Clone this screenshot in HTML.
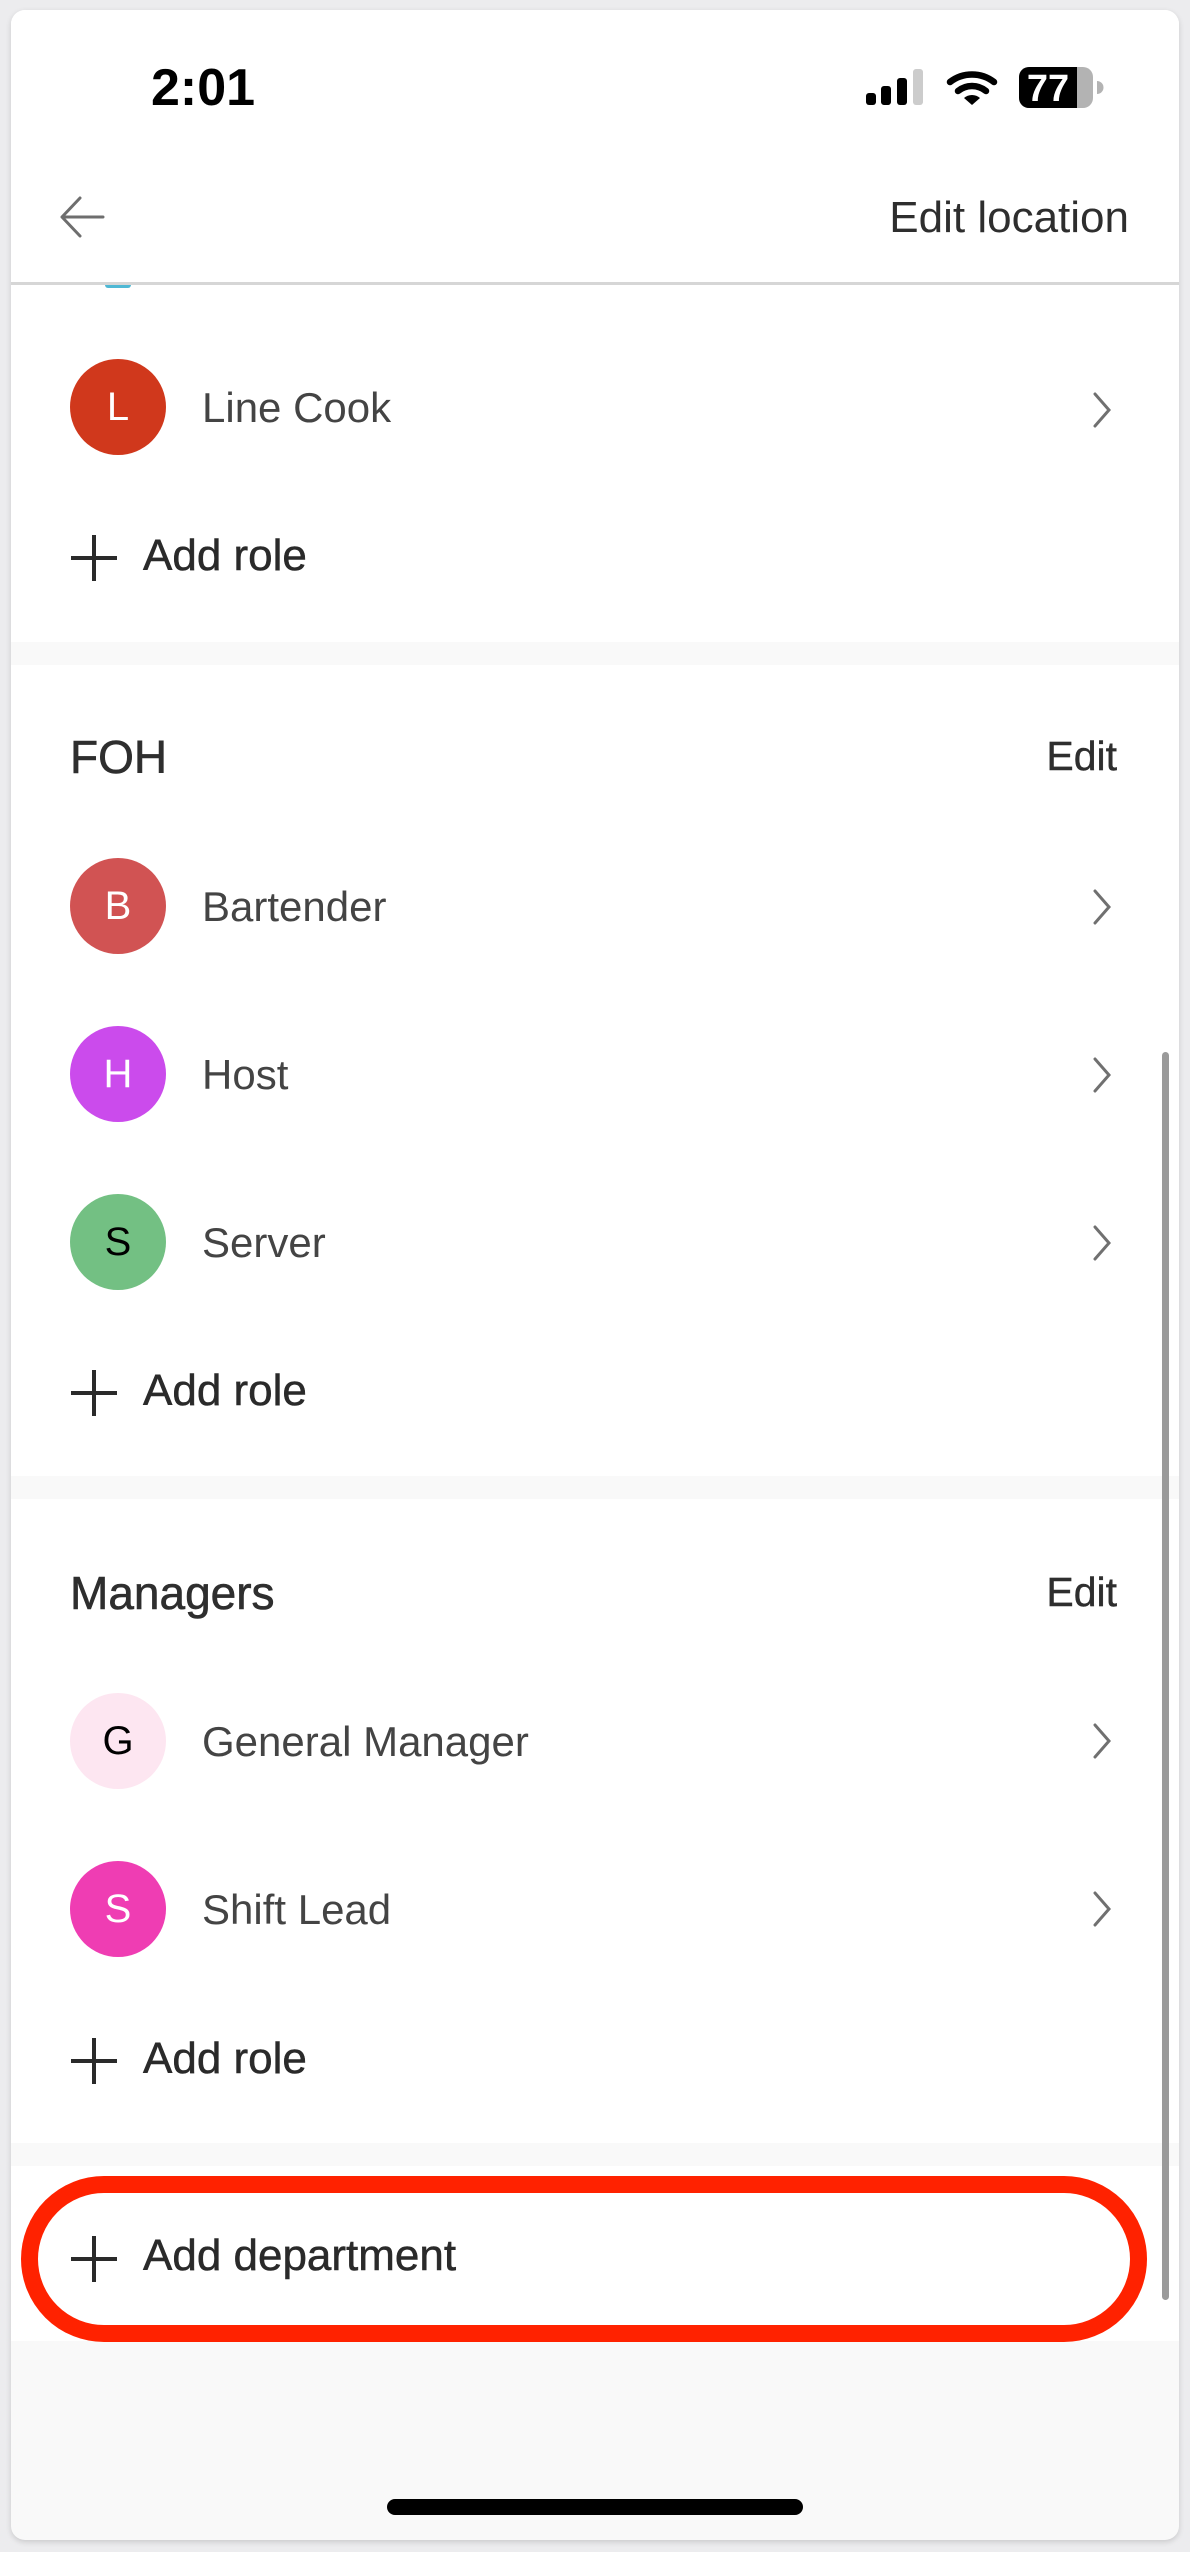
<!DOCTYPE html>
<html><head><meta charset="utf-8"><style>
html,body{margin:0;padding:0;width:1190px;height:2552px;background:#ececee;overflow:hidden;font-family:"Liberation Sans",sans-serif}
.card{position:absolute;left:11px;top:10px;width:1168px;height:2530px;background:#f9f9f9;border-radius:14px;overflow:hidden;box-shadow:0 2px 6px rgba(0,0,0,.15)}
.abs{position:absolute}
.white{position:absolute;left:0;width:1168px;background:#fff}
.t{position:absolute;line-height:1;white-space:nowrap}
.name{font-size:42px;color:#444}
.head{font-size:46px;color:#2e2e2e;-webkit-text-stroke:.6px #2e2e2e}
.add{font-size:44px;color:#2a2a2a;-webkit-text-stroke:.5px #2a2a2a}
.av{position:absolute;width:96px;height:96px;border-radius:50%;color:#fff;font-size:40px;line-height:96px;text-align:center}
</style></head><body>
<div class="card">
 <div class="white" style="top:0;height:632px"></div>
 <div class="white" style="top:655px;height:811px"></div>
 <div class="white" style="top:1489px;height:644px"></div>
 <div class="white" style="top:2156px;height:175px"></div>

 <div class="t" style="left:140px;top:52px;font-size:52px;font-weight:bold;color:#000">2:01</div>
 <svg class="abs" style="left:839px;top:40px" width="260" height="70" viewBox="850 50 260 70">
  <rect x="866" y="93" width="10" height="12" rx="3" fill="#000"/>
  <rect x="881" y="86" width="10" height="19" rx="3" fill="#000"/>
  <rect x="897" y="78" width="10" height="27" rx="3" fill="#000"/>
  <rect x="913" y="69" width="10" height="36" rx="3" fill="#ccc"/>
  <path d="M950 82 A36 36 0 0 1 994 82" stroke="#000" stroke-width="6.5" fill="none" stroke-linecap="round"/>
  <path d="M958 91 A22 22 0 0 1 986 91" stroke="#000" stroke-width="6.5" fill="none" stroke-linecap="round"/>
  <path d="M964 98 L972 105 L980 98 A12 12 0 0 0 964 98Z" fill="#000"/>
  <rect x="1019" y="67" width="74" height="41" rx="10" fill="#b3b3b3"/>
  <path d="M1029 67 H1077 V108 H1029 A10 10 0 0 1 1019 98 V77 A10 10 0 0 1 1029 67Z" fill="#000"/>
  <path d="M1097 81 A6 6 0 0 1 1097 94Z" fill="#b3b3b3"/>
  <text x="1048" y="101" font-family="Liberation Sans" font-weight="bold" font-size="38" fill="#fff" text-anchor="middle">77</text>
 </svg>

 <svg class="abs" style="left:48px;top:184px" width="50" height="50" viewBox="48 184 50 50">
  <path d="M92 207 H51 M69 188 L51 207 L69 226" stroke="#6e6e6e" stroke-width="3" fill="none" stroke-linecap="round" stroke-linejoin="round"/>
 </svg>
 <div class="t" style="right:50px;top:186px;font-size:44px;color:#2e2e2e">Edit location</div>
 <div class="abs" style="left:0;top:272px;width:1168px;height:3px;background:#d6d6d6"></div>
 <div class="abs" style="left:94px;top:275px;width:26px;height:3px;border-radius:0 0 13px 13px;background:#4fb8d4"></div>

 <!-- Line Cook -->
 <div class="av" style="left:59px;top:349px;background:#d0381c">L</div>
 <div class="t name" style="left:191px;top:377px">Line Cook</div>
 <svg class="abs" style="left:1080px;top:380px" width="30" height="40"><path d="M4 4 L18 20 L4 36" stroke="#707070" stroke-width="3" fill="none" stroke-linecap="round"/></svg>
 <svg class="abs" style="left:58px;top:523px" width="50" height="50"><path d="M25 2 V48 M2 25 H48" stroke="#2a2a2a" stroke-width="4"/></svg>
 <div class="t add" style="left:132px;top:524px">Add role</div>

 <!-- FOH -->
 <div class="t head" style="left:59px;top:724px">FOH</div>
 <div class="t head" style="right:62px;top:726px;font-size:41px;-webkit-text-stroke:.4px #2e2e2e">Edit</div>
 <div class="av" style="left:59px;top:848px;background:#d15353">B</div>
 <div class="t name" style="left:191px;top:876px">Bartender</div>
 <svg class="abs" style="left:1080px;top:877px" width="30" height="40"><path d="M4 4 L18 20 L4 36" stroke="#707070" stroke-width="3" fill="none" stroke-linecap="round"/></svg>
 <div class="av" style="left:59px;top:1016px;background:#cb4bec">H</div>
 <div class="t name" style="left:191px;top:1044px">Host</div>
 <svg class="abs" style="left:1080px;top:1045px" width="30" height="40"><path d="M4 4 L18 20 L4 36" stroke="#707070" stroke-width="3" fill="none" stroke-linecap="round"/></svg>
 <div class="av" style="left:59px;top:1184px;background:#73c083;color:#000">S</div>
 <div class="t name" style="left:191px;top:1212px">Server</div>
 <svg class="abs" style="left:1080px;top:1213px" width="30" height="40"><path d="M4 4 L18 20 L4 36" stroke="#707070" stroke-width="3" fill="none" stroke-linecap="round"/></svg>
 <svg class="abs" style="left:58px;top:1358px" width="50" height="50"><path d="M25 2 V48 M2 25 H48" stroke="#2a2a2a" stroke-width="4"/></svg>
 <div class="t add" style="left:132px;top:1359px">Add role</div>

 <!-- Managers -->
 <div class="t head" style="left:59px;top:1560px">Managers</div>
 <div class="t head" style="right:62px;top:1562px;font-size:41px;-webkit-text-stroke:.4px #2e2e2e">Edit</div>
 <div class="av" style="left:59px;top:1683px;background:#fde6f1;color:#000">G</div>
 <div class="t name" style="left:191px;top:1711px">General Manager</div>
 <svg class="abs" style="left:1080px;top:1711px" width="30" height="40"><path d="M4 4 L18 20 L4 36" stroke="#707070" stroke-width="3" fill="none" stroke-linecap="round"/></svg>
 <div class="av" style="left:59px;top:1851px;background:#ef3db3">S</div>
 <div class="t name" style="left:191px;top:1879px">Shift Lead</div>
 <svg class="abs" style="left:1080px;top:1879px" width="30" height="40"><path d="M4 4 L18 20 L4 36" stroke="#707070" stroke-width="3" fill="none" stroke-linecap="round"/></svg>
 <svg class="abs" style="left:58px;top:2026px" width="50" height="50"><path d="M25 2 V48 M2 25 H48" stroke="#2a2a2a" stroke-width="4"/></svg>
 <div class="t add" style="left:132px;top:2027px">Add role</div>

 <!-- Add department -->
 <svg class="abs" style="left:58px;top:2224px" width="50" height="50"><path d="M25 2 V48 M2 25 H48" stroke="#2a2a2a" stroke-width="4"/></svg>
 <div class="t add" style="left:132px;top:2224px">Add department</div>
 <div class="abs" style="left:10px;top:2166px;width:1126px;height:166px;box-sizing:border-box;border:17px solid #ff2200;border-radius:83px/83px"></div>

 <!-- scrollbar -->
 <div class="abs" style="left:1151px;top:1042px;width:7px;height:1248px;border-radius:4px;background:#9a9a9a"></div>
 <!-- home indicator -->
 <div class="abs" style="left:376px;top:2489px;width:416px;height:16px;border-radius:8px;background:#000"></div>
</div>
</body></html>
